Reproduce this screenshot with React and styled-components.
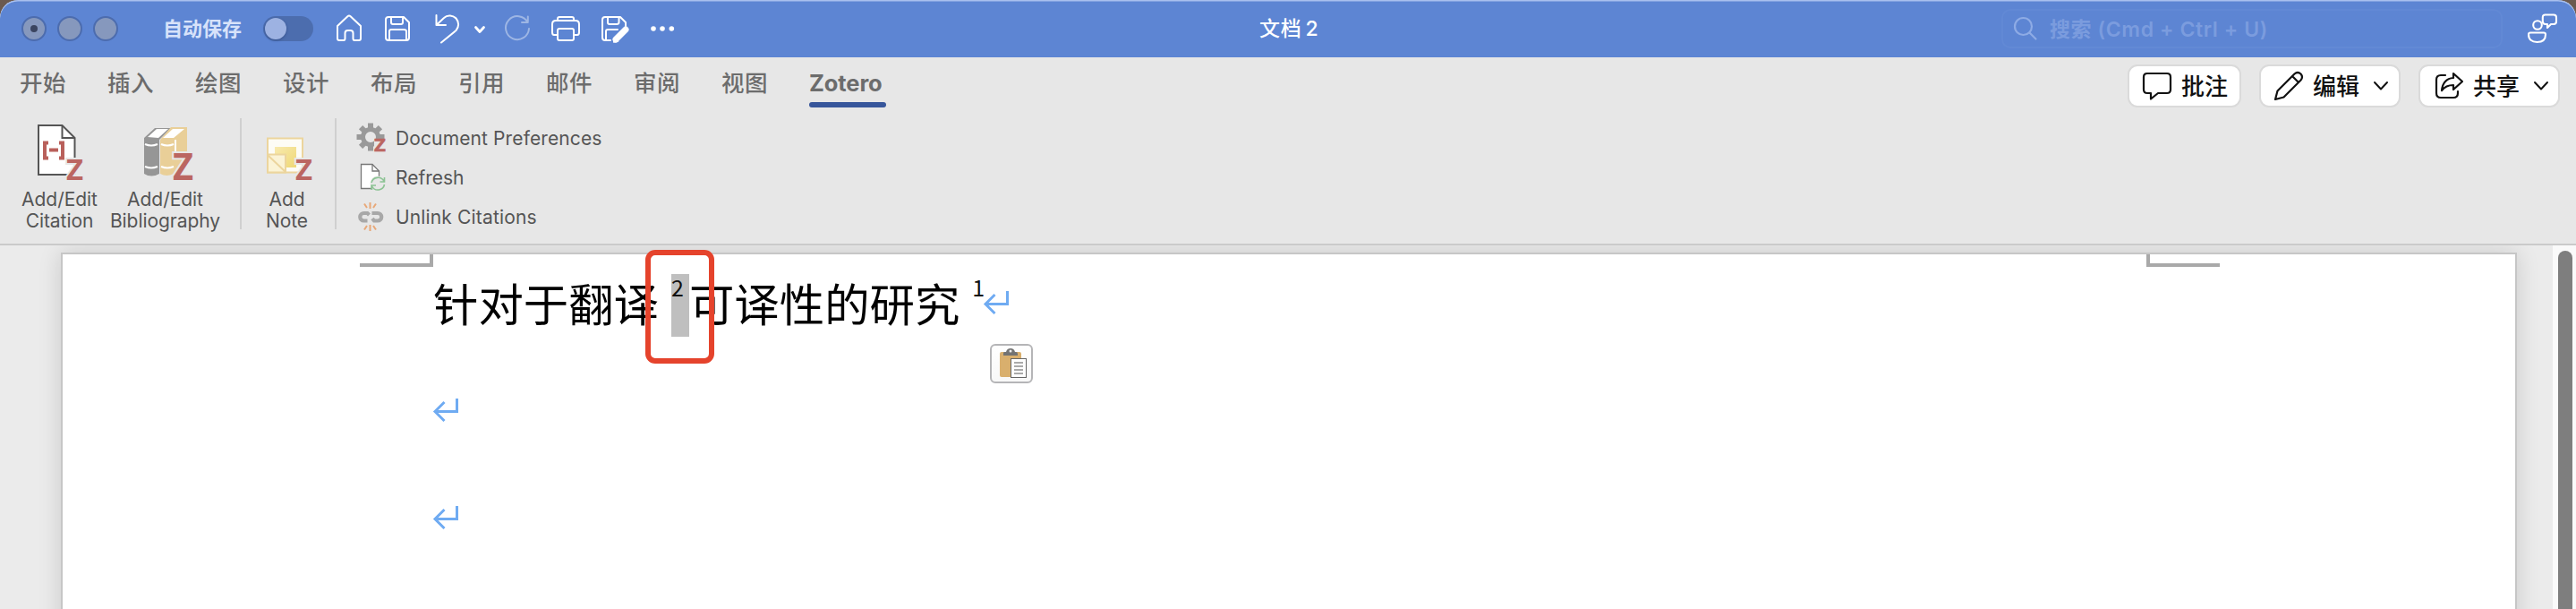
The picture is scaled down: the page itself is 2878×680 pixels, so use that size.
import React from "react";
import styled, { createGlobalStyle } from "styled-components";

const Global = createGlobalStyle`
  * { box-sizing: border-box; }
  body { margin: 0; background: #6b5a50; overflow: hidden; }
  svg { display: block; flex: none; overflow: visible; }
`;

const Window = styled.div`
  width: 2878px;
  height: 680px;
  display: flex;
  flex-direction: column;
  overflow: hidden;
  border-radius: 20px 20px 0 0;
  background: #e7e7e7;
  font-family: Inter, "Noto Sans CJK SC", sans-serif;
`;

const TitleBar = styled.header`
  height: 64px;
  flex: none;
  display: grid;
  grid-template-columns: 1407px 1fr auto;
  align-items: center;
  background: #5d85d3;
  box-shadow: inset 0 1.5px 0 #a9c0ee;
  border-radius: 20px 20px 0 0;
`;

const TitleLeft = styled.div`
  display: flex;
  align-items: center;
  padding-left: 24px;
`;

const Lights = styled.div`
  display: flex;
  gap: 12px;
`;

const Light = styled.span`
  width: 28px;
  height: 28px;
  display: grid;
  place-items: center;
  border-radius: 50%;
  border: 2px solid #4c6cae;
  background: #8698bd;
  &::after {
    content: "";
    width: 8px;
    height: 8px;
    border-radius: 50%;
    background: ${(p) => (p.$dot ? "#3b4560" : "transparent")};
  }
`;

const AutoSave = styled.span`
  margin-left: 50px;
  width: 89px;
  font-size: 22px;
  line-height: 30px;
  font-weight: 700;
  color: #d7e2fa;
  white-space: nowrap;
`;

const Toggle = styled.span`
  margin-left: 23px;
  width: 56px;
  height: 28px;
  padding: 2px;
  border-radius: 14px;
  background: #4c6dae;
  &::after {
    content: "";
    display: block;
    width: 24px;
    height: 24px;
    border-radius: 50%;
    background: #9db2e2;
    box-shadow: 0 1px 3px rgba(20, 40, 90, 0.4);
  }
`;

const QuickActions = styled.div`
  display: flex;
  align-items: center;
  margin-left: 24px;
`;

const QuickIcon = styled.svg.attrs({ fill: "none", stroke: "#fff", strokeWidth: 2, strokeLinejoin: "round", strokeLinecap: "round" })`
  width: ${(p) => p.$w}px;
  height: 32px;
  margin-right: ${(p) => p.$gap}px;
  opacity: ${(p) => (p.$dim ? 0.4 : 1)};
`;

const DocTitle = styled.h1`
  margin: 0;
  font-size: 23px;
  line-height: 32px;
  font-weight: 500;
  letter-spacing: 0.8px;
  word-spacing: -3px;
  color: #fff;
  white-space: nowrap;
`;

const TitleRight = styled.div`
  display: flex;
  align-items: center;
  padding-right: 20px;
`;

const SearchBox = styled.div`
  width: 560px;
  height: 44px;
  margin-right: 27px;
  padding-left: 12px;
  display: flex;
  align-items: center;
  gap: 14px;
  border: 2px solid #6289d5;
  border-radius: 10px;
  color: #7b9cde;
  font-size: 23px;
  font-weight: 600;
  line-height: 30px;
  letter-spacing: 0.6px;
`;

const SearchText = styled.span`
  padding-top: 2px;
`;

const TabBar = styled.nav`
  height: 60px;
  flex: none;
  display: flex;
  align-items: flex-start;
  justify-content: space-between;
  padding: 8px 18px 0 22px;
`;

const Tabs = styled.div`
  display: flex;
`;

const Tab = styled.span`
  width: ${(p) => (p.$active ? 86 : 98)}px;
  height: 48px;
  padding-top: 5px;
  font-size: 25.5px;
  line-height: 32px;
  letter-spacing: ${(p) => (p.$active ? "-0.1px" : "0.6px")};
  font-weight: ${(p) => (p.$active ? 700 : 500)};
  color: #6c6c6c;
  white-space: nowrap;
  &::after {
    content: "";
    display: ${(p) => (p.$active ? "block" : "none")};
    height: 6px;
    margin-top: 5px;
    border-radius: 3px;
    background: #37569b;
  }
`;

const Actions = styled.div`
  display: flex;
  gap: 20px;
`;

const ActionButton = styled.button`
  width: ${(p) => p.$w}px;
  height: 48px;
  padding: 0 0 0 ${(p) => p.$pad}px;
  display: flex;
  align-items: center;
  border: 2px solid #dadada;
  border-radius: 11px;
  background: #fff;
  font: 500 26px/32px Inter, "Noto Sans CJK SC", sans-serif;
  color: #111;
  white-space: nowrap;
`;

const ActionLabel = styled.span`
  width: 52px;
  padding-top: 1px;
  margin: 0 16px 0 11px;
`;

const Ribbon = styled.div`
  height: 150px;
  flex: none;
  display: flex;
  align-items: flex-start;
  padding: 8px 0 0 14px;
  border-bottom: 2px solid #cacaca;
  color: #555;
  font-size: 21px;
`;

const BigButton = styled.div`
  width: ${(p) => p.$w}px;
  display: flex;
  flex-direction: column;
  align-items: center;
  text-align: center;
  line-height: 24px;
  letter-spacing: -0.05px;
  white-space: pre-line;
`;

const BigIcon = styled.svg`
  width: 64px;
  height: 68px;
  margin: 4px 0 7px;
`;

const Divider = styled.i`
  width: 2px;
  height: 124px;
  margin-left: ${(p) => p.$before || 0}px;
  background: #d0d0d0;
`;

const Commands = styled.div`
  display: flex;
  flex-direction: column;
  padding-left: 22px;
`;

const Command = styled.div`
  height: 44px;
  display: flex;
  align-items: center;
  gap: 10px;
  letter-spacing: ${(p) => p.$ls}px;
  white-space: nowrap;
`;

const Workspace = styled.main`
  flex: 1;
  display: flex;
  justify-content: space-between;
  overflow: hidden;
  padding-left: 68px;
  background: #ebebeb;
`;

const Page = styled.section`
  position: relative;
  width: 2744px;
  height: 440px;
  margin-top: 8px;
  border: 2px solid #c6c6c6;
  background: #fff;
  box-shadow: 0 0 24px rgba(0, 0, 0, 0.14);
`;

const Margins = styled.div`
  display: flex;
  justify-content: space-between;
  padding: 0 330px 0 332px;
`;

const Corner = styled.i`
  width: 82px;
  height: 14px;
  border: solid #a9a9a9;
  border-width: ${(p) => (p.$right ? "0 0 4px 4px" : "0 4px 4px 0")};
`;

const Paragraph = styled.p`
  margin: ${(p) => p.$top}px 0 0 414px;
  height: ${(p) => p.$h}px;
  display: flex;
  align-items: flex-start;
`;

const Run = styled.span`
  font: 400 50.4px/64px "Noto Sans CJK SC", sans-serif;
  color: #000;
  white-space: nowrap;
`;

const Note = styled.span`
  width: ${(p) => (p.$selected ? 20 : 13)}px;
  height: 70px;
  margin-left: 14px;
  font: 400 25px/28px "Noto Sans CJK SC", sans-serif;
  color: #111;
  background: ${(p) => (p.$selected ? "#bfbfbf" : "transparent")};
`;

const Mark = styled.svg`
  width: 28px;
  height: 26px;
  margin-top: ${(p) => p.$top || 0}px;
`;

const Highlight = styled.div`
  position: absolute;
  left: 651px;
  top: -5px;
  width: 77px;
  height: 127px;
  border: 6px solid #e5432c;
  border-radius: 11px;
`;

const PasteButton = styled.button`
  position: absolute;
  left: 1036px;
  top: 100px;
  width: 48px;
  height: 44px;
  padding: 0 0 1px 8px;
  display: flex;
  align-items: center;
  border: 2px solid #b5b5b7;
  border-radius: 6px;
  background: linear-gradient(#fff, #f8f8f8);
`;

const Track = styled.aside`
  width: 26px;
  padding: 6px 4px 0 6px;
  background: #fafafa;
`;

const Thumb = styled.div`
  height: 440px;
  border-radius: 8px;
  background: #7e7e7e;
`;

const ReturnMark = ({ top }) => (
  <Mark $top={top} viewBox="0 0 28 26" fill="none" stroke="#6fabf2" strokeWidth="3">
    <path d="M26.5 0V14.5H2M12.5 4L2 14.5L12.5 25" />
  </Mark>
);

const Z = ({ x, y, w, size, halo }) => (
  <text
    x={x}
    y={y}
    fontFamily="Open Sans, sans-serif"
    fontWeight="700"
    fontSize={size}
    textLength={w}
    lengthAdjust="spacingAndGlyphs"
    fill="#bb6661"
    stroke={halo ? "#e7e7e7" : "#bb6661"}
    strokeWidth={halo ? 4 : 0.5}
    paintOrder="stroke"
  >
    Z
  </text>
);

const Chevron = () => (
  <svg width="16" height="10" viewBox="0 0 16 10" fill="none" stroke="#111" strokeWidth="2" strokeLinecap="round" strokeLinejoin="round">
    <path d="M1 1l7 7.5L15 1" />
  </svg>
);

const teeth = [0, 45, 90, 135, 180, 225, 270, 315];

export default function App() {
  return (
    <Window>
      <Global />
      <TitleBar>
        <TitleLeft>
          <Lights><Light $dot /><Light /><Light /></Lights>
          <AutoSave>自动保存</AutoSave>
          <Toggle />
          <QuickActions>
            <QuickIcon $w={32} $gap={24} viewBox="0 0 32 32">
              <path d="M3 13L14.4 2.2Q16 .8 17.6 2.2L29 13V27Q29 29 27 29H22Q20.500 29 20.500 27V21Q20.500 18 17.500 18H14.500Q11.500 18 11.500 21V27Q11.500 29 10 29H5Q3 29 3 27Z" />
            </QuickIcon>
            <QuickIcon $w={28} $gap={28} viewBox="0 0 28 32">
              <path d="M1 6Q1 3 4 3H21L27 9V26Q27 29 24 29H4Q1 29 1 26ZM7 3V9Q7 11 9 11H18Q20 11 20 9V3M5 29V19Q5 17 7 17H21Q24 17 24 19V29" />
            </QuickIcon>
            <QuickIcon $w={28} $gap={16} viewBox="0 0 28 32">
              <path d="M1.500 1V12H12M1.500 12L10 4C14 0 20 1 23.500 4.500C27 8.500 27 14 23.500 18L7 31.500" />
            </QuickIcon>
            <QuickIcon $w={12} $gap={22} viewBox="0 0 12 32">
              <path strokeWidth="2.800" d="M1.500 14.500L6 19.500L10.500 14.500" />
            </QuickIcon>
            <QuickIcon $w={28} $gap={24} $dim viewBox="0 0 28 32">
              <path d="M25.800 8V2.500M25.800 9H19M25.500 9A13 13 0 1 0 27 16" />
            </QuickIcon>
            <QuickIcon $w={32} $gap={24} viewBox="0 0 32 32">
              <path d="M7 7V5Q7 3 9 3H23Q25 3 25 5V7M7 23H3Q1 23 1 20V11Q1 7 5 7H27Q31 7 31 11V20Q31 23 29 23H25M9 16H23Q25 16 25 18V27Q25 29 23 29H9Q7 29 7 27V18Q7 16 9 16Z" />
            </QuickIcon>
            <QuickIcon $w={31} $gap={24} viewBox="0 0 31 32">
              <path d="M10 29H4Q1 29 1 26V6Q1 3 4 3H21L27 9V13M7 3V9Q7 11 9 11H17Q19.500 11 19.500 9V3M5 29V19Q5 17 7 17H18" />
              <path d="M16 28L27 17" strokeWidth="7" />
              <path d="M13.500 31l1-5 4 4Z" fill="#fff" strokeWidth="1" />
            </QuickIcon>
            <QuickIcon $w={26} $gap={0} viewBox="0 0 26 32">
              <g fill="#fff" stroke="none"><circle cx="3" cy="16" r="2.800" /><circle cx="13" cy="16" r="2.800" /><circle cx="23.300" cy="16" r="2.800" /></g>
            </QuickIcon>
          </QuickActions>
        </TitleLeft>
        <DocTitle>文档 2</DocTitle>
        <TitleRight>
          <SearchBox>
            <svg width="26" height="26" viewBox="0 0 26 26" fill="none" stroke="#8eabe5" strokeWidth="2.200" strokeLinecap="round"><circle cx="10.500" cy="10.500" r="9.500" /><path d="M17.500 17.500L24.500 24.500" /></svg>
            <SearchText>搜索 (Cmd + Ctrl + U)</SearchText>
          </SearchBox>
          <svg width="35" height="34" viewBox="0 0 35 34" fill="none" stroke="#fff" strokeWidth="2.100" strokeLinejoin="round">
            <circle cx="12" cy="13" r="4.800" />
            <path d="M4 21.500H19Q21 21.500 21 23.500C21 29 17.500 32 11.500 32S2 29 2 23.500Q2 21.500 4 21.500Z" />
            <path d="M20.500 1.500H30Q33 1.500 33 4.500V9Q33 12 30 12H27L23 16V12H21Q17.800 12 17.800 9V4.500Q17.800 1.500 20.500 1.500Z" />
          </svg>
        </TitleRight>
      </TitleBar>

      <TabBar>
        <Tabs>
          {["开始", "插入", "绘图", "设计", "布局", "引用", "邮件", "审阅", "视图"].map((t) => <Tab key={t}>{t}</Tab>)}
          <Tab $active>Zotero</Tab>
        </Tabs>
        <Actions>
          <ActionButton $w={127} $pad={15}>
            <svg width="32" height="32" viewBox="0 0 32 32" fill="none" stroke="#111" strokeWidth="2.200" strokeLinejoin="round"><path d="M5 2H27Q31 2 31 6V20Q31 24 27 24H17L9 30.500V24H5Q1 24 1 20V6Q1 2 5 2Z" /></svg>
            <ActionLabel>批注</ActionLabel>
          </ActionButton>
          <ActionButton $w={158} $pad={15}>
            <svg width="32" height="32" viewBox="0 0 32 32" fill="none" stroke="#111" strokeWidth="2.200" strokeLinejoin="round"><path d="M1 31L3.500 21.500L22.500 2.500Q26 -.5 29.500 2.500Q32.500 6 29.500 9.500L10.500 28.500ZM20 5L27 12" /></svg>
            <ActionLabel>编辑</ActionLabel>
            <Chevron />
          </ActionButton>
          <ActionButton $w={158} $pad={17}>
            <svg width="31" height="32" viewBox="0 0 31 32" fill="none" stroke="#111" strokeWidth="2.200" strokeLinejoin="round" strokeLinecap="round"><path d="M11 4H6Q1 4 1 9V24Q1 29 6 29H20Q25 29 25 24V22M20 2L30 11L20 20V15C14 15 10 17 7 21C8 12 13 7.500 20 7Z" /></svg>
            <ActionLabel>共享</ActionLabel>
            <Chevron />
          </ActionButton>
        </Actions>
      </TabBar>

      <Ribbon>
        <BigButton $w={105}>
          <BigIcon viewBox="0 0 64 68">
            <path d="M8 4H34.500L48.500 18V59H8Z" fill="#fff" stroke="#555" strokeWidth="2" />
            <path d="M34.500 4V18H48.500" fill="none" stroke="#555" strokeWidth="2" />
            <path d="M19 23.500H15V40.500H19M31 23.500H35V40.500H31M20 31.500H30" fill="none" stroke="#b9605b" strokeWidth="4" />
            <Z x={39} y={65} w={19} size={33} halo />
          </BigIcon>
          {"Add/Edit\nCitation"}
        </BigButton>
        <BigButton $w={131}>
          <BigIcon viewBox="0 0 64 68">
            <path d="M8 18L20 7H38L25 20V58Q16 63 8 58Z" fill="#969696" />
            <path d="M12 17L22 8H35L24 18Z" fill="#fff" />
            <path d="M9 25Q16 28 23 25M9 50Q16 53 23 50" stroke="#fff" strokeWidth="2" fill="none" />
            <path d="M26 20L38 6H56V40L41 58Q33 62 26 58Z" fill="#e9cf98" />
            <path d="M29 18L40 8H53L41 18Z" fill="#fff" />
            <path d="M43 20V36" stroke="#fff" strokeWidth="2" />
            <path d="M27 25Q34 28 41 25M27 50Q34 53 41 50" stroke="#fff" strokeWidth="2" fill="none" />
            <Z x={40} y={65} w={23} size={41} halo />
          </BigIcon>
          {"Add/Edit\nBibliography"}
        </BigButton>
        <Divider $before={18} />
        <BigButton $w={101}>
          <BigIcon viewBox="0 0 64 68">
            <defs><linearGradient id="note" x1="0" y1="0" x2="1" y2="1"><stop offset="0" stopColor="#f8eaae" /><stop offset="1" stopColor="#efd875" /></linearGradient></defs>
            <rect x="10" y="18.500" width="39" height="38" fill="#fdfcf5" stroke="#ecd59d" strokeWidth="2" />
            <rect x="18" y="28" width="24" height="23" fill="url(#note)" />
            <path d="M10 36.500H30V56.500H10ZM11 38L30 56" fill="#fbf3d5" stroke="#ecd59d" strokeWidth="2" />
            <Z x={41} y={65} w={19} size={33} halo />
          </BigIcon>
          {"Add\nNote"}
        </BigButton>
        <Divider $before={3} />
        <Commands>
          <Command $ls={0.12}>
            <svg width="34" height="34" viewBox="0 0 34 34">
              {teeth.map((a) => <rect key={a} x="13" y="0.500" width="6" height="8" fill="#999" transform={`rotate(${a} 16 16)`} />)}
              <circle cx="16" cy="16" r="8.500" fill="none" stroke="#999" strokeWidth="5" />
              <path d="M20 18H34V34H20Z" fill="#e7e7e7" />
              <Z x={20} y={32} w={13} size={19} />
            </svg>
            Document Preferences
          </Command>
          <Command $ls={0}>
            <svg width="34" height="34" viewBox="0 0 34 34" fill="none">
              <path d="M5.500 2.500H18L25.500 10V29.500H5.500Z" fill="#fff" stroke="#777" strokeWidth="1.300" />
              <path d="M18 2.500V10H25.500" stroke="#777" strokeWidth="1.300" />
              <circle cx="24" cy="24" r="8.500" fill="#e7e7e7" />
              <path d="M17 23A7.500 7.500 0 0 1 31 21.500M31.500 17V22H26.500M31.500 25A7.500 7.500 0 0 1 17.500 27M17 31V26H22" stroke="#8cc394" strokeWidth="1.600" />
            </svg>
            Refresh
          </Command>
          <Command $ls={0.15}>
            <svg width="34" height="34" viewBox="0 0 34 34" fill="none">
              <path d="M14.500 15L12.500 13H8.500A4.200 4.200 0 0 0 8.500 21.500H12.500M17.500 13H24A4.200 4.200 0 0 1 24 21.500H20L18 19" stroke="#a8a8a8" strokeWidth="4.200" />
              <path d="M15.500 1V8M9 2.500L12 7M22 2.500L19 7M15.500 26V33M12 27L9 31.500M19 27L22 31.500" stroke="#e8a878" strokeWidth="2" />
            </svg>
            Unlink Citations
          </Command>
        </Commands>
      </Ribbon>

      <Workspace>
        <Page>
          <Margins><Corner /><Corner $right /></Margins>
          <Paragraph $top={8} $h={70}>
            <Run>针对于翻译</Run>
            <Note $selected>2</Note>
            <Run>可译性的研究</Run>
            <Note>1</Note>
            <ReturnMark top={19} />
          </Paragraph>
          <Paragraph $top={69} $h={26}><ReturnMark /></Paragraph>
          <Paragraph $top={94} $h={26}><ReturnMark /></Paragraph>
          <Highlight />
          <PasteButton>
            <svg width="32" height="34" viewBox="0 0 32 34">
              <rect x="1" y="4" width="24" height="28" rx="2" fill="#d9af6d" />
              <path d="M5 8V5Q5 4 7 4H8Q9 0 13 0T18 4H19Q21 4 21 6V8Z" fill="#737373" />
              <circle cx="13" cy="3" r="1.500" fill="#eee" />
              <rect x="13.500" y="11.500" width="17" height="21" fill="#fff" stroke="#666" />
              <path d="M17 16H27M17 20H27M17 24H27M17 28H27" stroke="#aaa" strokeWidth="2" />
            </svg>
          </PasteButton>
        </Page>
        <Track><Thumb /></Track>
      </Workspace>
    </Window>
  );
}
